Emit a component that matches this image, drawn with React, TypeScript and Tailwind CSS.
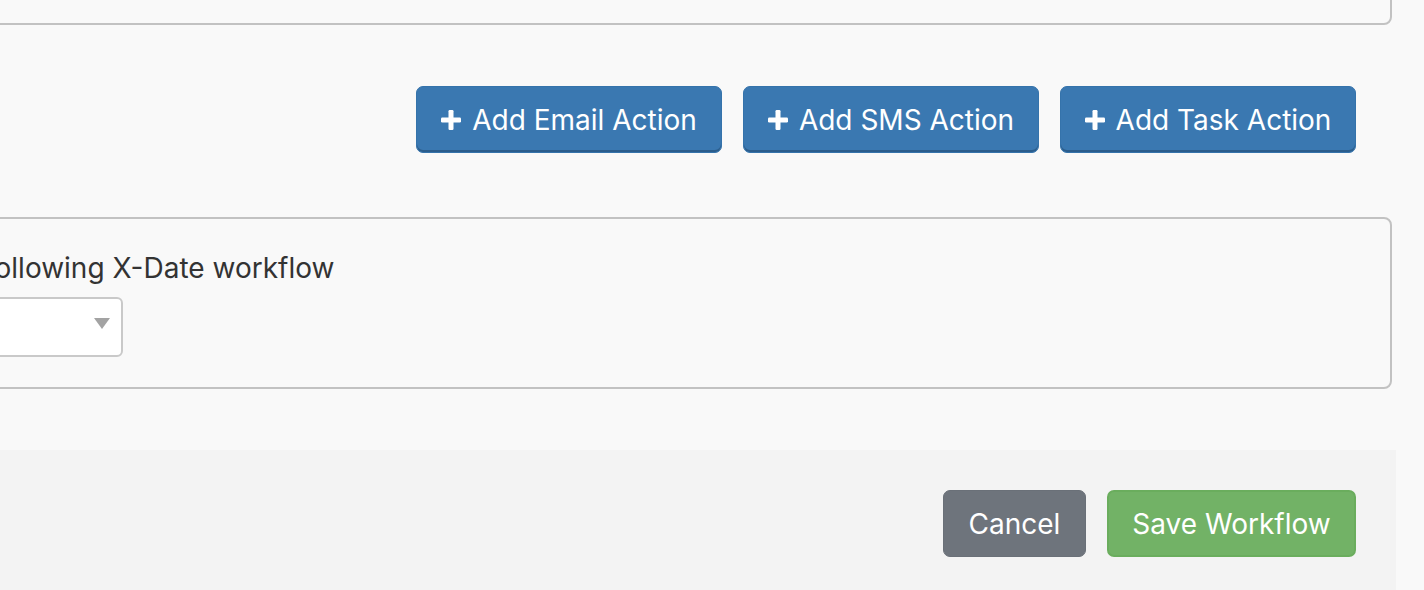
import React from 'react';

function PlusIcon() {
  return (
    <svg width="20" height="20" viewBox="0 0 20 20" className="shrink-0" aria-hidden>
      <rect x="7.5" y="0" width="5" height="20" rx="1.2" fill="white" />
      <rect x="0" y="7.5" width="20" height="5" rx="1.2" fill="white" />
    </svg>
  );
}

function ActionButton({ label, width }: { label: string; width: string }) {
  return (
    <button
      className={`flex h-[67px] items-center justify-center gap-[11px] rounded-[7px] border border-[#3573ab] bg-[#3a78b1] text-[28px] text-white shadow-[inset_0_-2px_0_#2b5d8c] ${width}`}
    >
      <PlusIcon />
      <span>{label}</span>
    </button>
  );
}

export default function App() {
  return (
    <div
      className="h-[590px] w-full overflow-hidden bg-[#f9f9f9] text-[#333]"
      style={{ fontFamily: 'Inter, "Noto Sans", sans-serif' }}
    >
      <div className="-ml-[47px] mr-[32px]">
        {/* previous panel, cut off at the top */}
        <div className="-mt-[40px] h-[65px] rounded-b-[8px] border-2 border-[#c2c2c2] bg-[#f9f9f9]" />

        <div className="mt-[61px] flex justify-end gap-[21px] pr-[36px]">
          <ActionButton label="Add Email Action" width="w-[306px]" />
          <ActionButton label="Add SMS Action" width="w-[296px]" />
          <ActionButton label="Add Task Action" width="w-[296px]" />
        </div>

        <div className="mt-[64px] h-[172px] rounded-[8px] border-2 border-[#c2c2c2] bg-[#f9f9f9] px-[30px] pt-[29px]">
          <label className="block whitespace-nowrap text-[28px] leading-[40px]">following X-Date workflow</label>
          <div className="relative mt-[9px] h-[60px] w-[138px] rounded-[6px] border-2 border-[#c9c9c9] bg-white">
            <svg width="16" height="11" viewBox="0 0 16 11" className="absolute right-[11px] top-[19px]" aria-hidden>
              <polygon points="0,0 16,0 8,11" fill="#a3a3a3" />
            </svg>
          </div>
        </div>
      </div>

      <div className="-ml-[47px] mr-[28px] mt-[61px] flex h-[200px] justify-end gap-[21px] bg-[#f3f3f3] pr-[40px] pt-[40px]">
        <button className="h-[67px] w-[143px] rounded-[7px] border border-[#6a7078] bg-[#6e747c] text-[28px] text-white">
          Cancel
        </button>
        <button className="h-[67px] w-[249px] rounded-[7px] border-2 border-[#6aad5d] bg-[#72b266] text-[28px] text-white">
          Save Workflow
        </button>
      </div>
    </div>
  );
}
